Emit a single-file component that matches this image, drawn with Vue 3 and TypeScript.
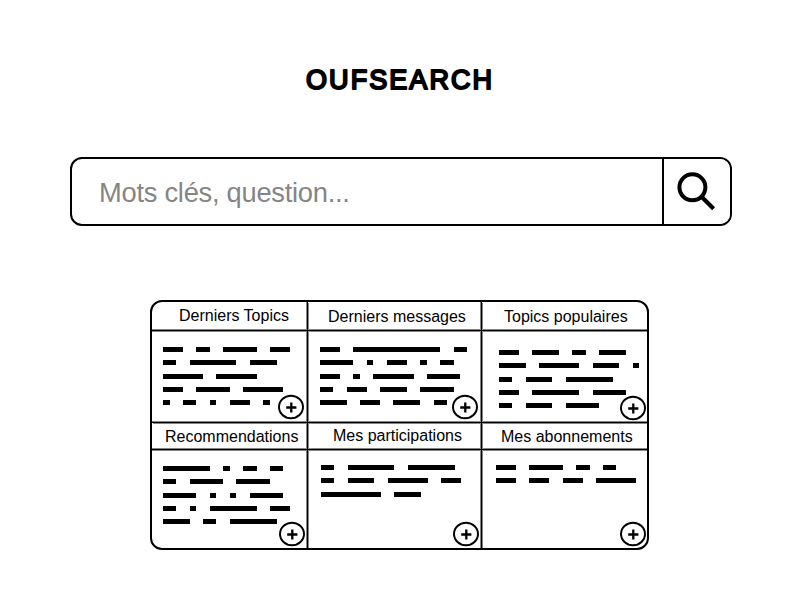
<script setup lang="ts">
interface Card {
  title: string
  shift: string
  body: string
  rows: number[][]
}

const unit = 6.68

const cards: Card[] = [
  {
    title: 'Derniers Topics', shift: 't1', body: 'b1',
    rows: [[3, 2, 5, 3], [2, 7, 4], [6, 6], [3, 5, 6], [1, 2, 1, 3, 1]],
  },
  {
    title: 'Derniers messages', shift: 't2', body: 'b2',
    rows: [[3, 13, 2], [5, 1, 3, 1, 2], [3, 1, 6, 5], [2, 3, 4, 5], [4, 3, 4, 2]],
  },
  {
    title: 'Topics populaires', shift: 't3', body: 'b3',
    rows: [[3, 4, 2, 4], [4, 6, 4, 1], [2, 4, 7], [3, 7, 5], [2, 4, 5]],
  },
  {
    title: 'Recommendations', shift: 't4', body: 'b4',
    rows: [[7, 1, 2, 2], [2, 5, 5], [5, 1, 1, 5], [2, 1, 7, 3], [4, 2, 7]],
  },
  {
    title: 'Mes participations', shift: 't5', body: 'b5',
    rows: [[2, 7, 7], [2, 4, 6, 3], [9, 4]],
  },
  {
    title: 'Mes abonnements', shift: 't6', body: 'b6',
    rows: [[3, 5, 2, 2], [3, 3, 3, 6]],
  },
]
</script>

<template>
  <main class="page">
    <h1 class="brand">
      <svg width="200" height="40" viewBox="0 0 200 40">
        <text x="6" y="29" textLength="186" lengthAdjust="spacing" class="brand-text">OUFSEARCH</text>
      </svg>
    </h1>

    <form class="search" @submit.prevent>
      <input class="field" type="text" placeholder="Mots clés, question..." />
      <button class="go" type="submit" aria-label="Rechercher">
        <svg width="67" height="65" viewBox="0 0 67 65">
          <circle cx="28.4" cy="28.3" r="13" fill="none" stroke="#000" stroke-width="4" />
          <path d="M37.3 37.6 L49.6 49.8" stroke="#000" stroke-width="4.2" />
        </svg>
      </button>
    </form>

    <section class="board">
      <article v-for="card in cards" :key="card.title" class="card">
        <h2 class="head"><span :class="card.shift">{{ card.title }}</span></h2>
        <div class="body" :class="card.body">
          <div v-for="(row, r) in card.rows" :key="r" class="row">
            <i v-for="(n, w) in row" :key="w" class="word" :style="{ width: n * unit + 'px' }"></i>
          </div>
          <svg class="plus" width="28" height="26" viewBox="0 0 28 26">
            <ellipse cx="14" cy="13" rx="12" ry="11.2" fill="#fff" stroke="#000" stroke-width="2" />
            <path d="M9.2 13.5 H19.4 M14.3 8.5 V18.5" stroke="#000" stroke-width="2.3" />
          </svg>
        </div>
      </article>
    </section>
  </main>
</template>

<style>
body {
  margin: 0;
  background: #fff;
}
</style>

<style scoped>
.page {
  box-sizing: border-box;
  width: 800px;
  height: 600px;
  padding-top: 60px;
  background: #fff;
  color: #000;
  font-family: "Liberation Sans", Arial, sans-serif;
  overflow: hidden;
}
.brand {
  display: flex;
  justify-content: center;
  height: 40px;
  margin: 0 0 57px;
}
.brand-text {
  font-family: "Liberation Sans", Arial, sans-serif;
  font-size: 27px;
  font-weight: 400;
  fill: #000;
  stroke: #000;
  stroke-width: 2px;
  stroke-linejoin: round;
}
.search {
  box-sizing: border-box;
  display: flex;
  width: 662px;
  height: 69px;
  margin: 0 0 74px 70px;
  border: 2px solid #000;
  border-radius: 12px;
  overflow: hidden;
}
.field {
  box-sizing: border-box;
  width: 590px;
  height: 65px;
  padding: 3px 27px 0;
  border: 0;
  outline: 0;
  background: transparent;
  font-family: inherit;
  font-size: 27.3px;
  letter-spacing: -0.26px;
}
.field::placeholder {
  color: #858585;
  opacity: 1;
}
.go {
  flex: none;
  width: 68px;
  margin-left: auto;
  padding: 0;
  border: 0;
  border-left: 2px solid #000;
  background: #fff;
}
.field {
  flex: none;
}
.go svg {
  display: block;
}
.board {
  box-sizing: border-box;
  display: grid;
  grid-template-columns: 156px 174px 165px;
  grid-template-rows: 121px 125px;
  width: 499px;
  height: 250px;
  margin-left: 150px;
  border: 2px solid #000;
  border-radius: 12px;
}
.card {
  display: flex;
  flex-direction: column;
  box-sizing: border-box;
  min-width: 0;
}
/* Rules between cells: a black hairline with a grey edge on each side */
.card:not(:nth-child(3n)) {
  border-right: 1px solid #000;
  box-shadow: 1px 0 #858585, inset -1px 0 #858585;
}
.card:nth-child(-n + 3) {
  border-bottom: 1px solid #000;
  box-shadow: 1px 1px #858585, inset -1px -1px #858585;
}
.card:nth-child(3) {
  box-shadow: 0 1px #858585, inset 0 -1px #858585;
}
.head {
  box-sizing: border-box;
  height: 29px;
  margin: 0;
  border-bottom: 1px solid #000;
  box-shadow: 0 1px #858585, inset 0 -1px #858585;
  font-size: 16px;
  line-height: 18px;
  font-weight: 400;
  white-space: nowrap;
}
.card:nth-child(n + 4) .head {
  height: 27px;
}
.head span {
  display: block;
}
.t1 { padding: 5px 0 0 27px; }
.t2 { padding: 6px 0 0 20px; }
.t3 { padding: 6px 0 0 22px; }
.t4 { padding: 5px 0 0 13px; }
.t5 { padding: 4px 0 0 25px; }
.t6 { padding: 5px 0 0 19px; }
.body {
  position: relative;
  flex: 1;
}
.b1 { padding: 16px 0 0 11px; }
.b2 { padding: 16px 0 0 12px; }
.b3 { padding: 19px 0 0 17px; }
.b4 { padding: 16px 0 0 11px; }
.b5 { padding: 15px 0 0 13px; }
.b6 { padding: 15px 0 0 14px; }
.row {
  display: flex;
  gap: 13.36px;
  height: 13px;
}
.row:nth-child(2) {
  height: 14px;
}
.word {
  height: 5px;
  background: #000;
}
.plus {
  position: absolute;
}
.b1 .plus { right: 2.3px; bottom: 2.5px; }
.b2 .plus { right: 2.3px; bottom: 2.5px; }
.b3 .plus { right: 0.3px; bottom: 1.3px; }
.b4 .plus { right: 1.3px; bottom: 0.7px; }
.b5 .plus { right: 1.5px; bottom: 1.5px; }
.b6 .plus { right: 0.3px; bottom: 0.6px; }
</style>
